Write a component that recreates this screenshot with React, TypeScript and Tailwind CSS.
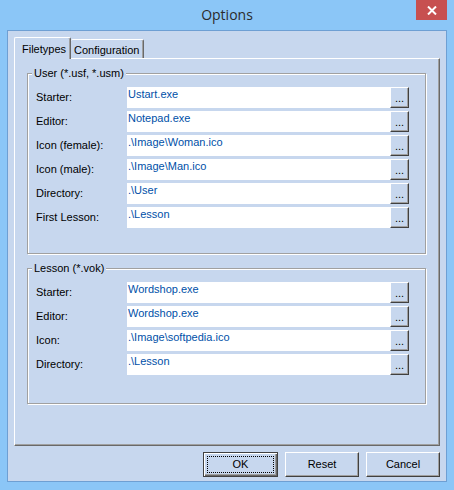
import React from 'react';

const userRows = [
    { label: 'Starter:', value: 'Ustart.exe' },
    { label: 'Editor:', value: 'Notepad.exe' },
    { label: 'Icon (female):', value: '.\\Image\\Woman.ico' },
    { label: 'Icon (male):', value: '.\\Image\\Man.ico' },
    { label: 'Directory:', value: '.\\User' },
    { label: 'First Lesson:', value: '.\\Lesson' },
];

const lessonRows = [
    { label: 'Starter:', value: 'Wordshop.exe' },
    { label: 'Editor:', value: 'Wordshop.exe' },
    { label: 'Icon:', value: '.\\Image\\softpedia.ico' },
    { label: 'Directory:', value: '.\\Lesson' },
];

const Row = ({ label, value }: { label: string; value: string }) => (
    <div className="flex items-center h-[21px]">
        <span className="w-[91px] text-black">{label}</span>
        <div className="w-[263px] h-[21px] bg-white pl-[1px] pt-[1px] leading-[13px] text-[#0050a8] whitespace-nowrap overflow-hidden">
            {value}
        </div>
        <button className="w-[19px] h-[21px] bg-[#c7d7ee] border border-white border-r-[#404040] border-b-[#404040] shadow-[inset_-1px_-1px_0_#a0a0a0] flex items-center justify-center leading-none pt-[2px] text-black">
            ...
        </button>
    </div>
);

const Group = ({ title, rows, height }: { title: string; rows: { label: string; value: string }[]; height: string }) => (
    <fieldset
        className={`w-[399px] ${height} border border-[#a0a0a0] shadow-[1px_1px_0_white,inset_1px_1px_0_white] pl-[8px] pt-[7px]`}
    >
        <legend className="-ml-[4px] px-[2px] leading-[14px] bg-[#c7d7ee] text-black">{title}</legend>
        <div className="flex flex-col gap-[3px]">
            {rows.map((r) => (
                <Row key={r.label} label={r.label} value={r.value} />
            ))}
        </div>
    </fieldset>
);

const DlgButton = ({ label, isDefault }: { label: string; isDefault?: boolean }) =>
    isDefault ? (
        <button className="w-[75px] h-[25px] bg-[#c7d7ee] border border-[#404040] shadow-[inset_1px_1px_0_white,inset_-1px_-1px_0_#696969,inset_-2px_-2px_0_#a0a0a0] p-[3px] text-black">
            <div className="h-full w-full border border-dotted border-black flex items-center justify-center">{label}</div>
        </button>
    ) : (
        <button className="w-[74px] h-[25px] bg-[#c7d7ee] border border-white border-r-[#404040] border-b-[#404040] shadow-[inset_-1px_-1px_0_#a0a0a0] flex items-center justify-center text-black">
            {label}
        </button>
    );

export default function App() {
    return (
        <div className="w-[454px] h-[490px] bg-[#8bc6f7] flex flex-col px-[7px] pb-[8px] font-['Liberation_Sans',Arial,sans-serif] text-[11px] select-none">
            {/* title bar */}
            <div className="h-[30px] grid grid-cols-[1fr_auto_1fr] -mx-[7px]">
                <div />
                <div className="font-['Open_Sans',sans-serif] text-[14px] text-[#2b2b2b] pt-[4px]">Options</div>
                <div className="flex justify-end pr-[7px]">
                    <button className="w-[31px] h-[20px] bg-[#c75050] flex items-center justify-center">
                        <svg width="10" height="9" viewBox="0 0 10 9">
                            <path d="M1 0.5 L9 8.5 M9 0.5 L1 8.5" stroke="white" strokeWidth="2" />
                        </svg>
                    </button>
                </div>
            </div>

            {/* client */}
            <div className="flex-1 bg-[#c7d7ee] border border-[#6e9fd3] flex flex-col px-[6px] pt-[6px]">
                <div className="flex items-end h-[21px]">
                    <div className="relative z-10 w-[57px] h-[22px] -mb-[1px] bg-[#c7d7ee] border-l border-t border-r border-white border-r-[#696969] rounded-t-[2px] shadow-[inset_-1px_0_0_#a0a0a0] px-[7px] pt-[3px] text-black">
                        Filetypes
                    </div>
                    <div className="w-[73px] h-[19px] bg-[#c7d7ee] border-t border-r border-white border-r-[#696969] rounded-t-[2px] shadow-[inset_-1px_0_0_#a0a0a0] px-[3px] pt-[2px] text-black">
                        Configuration
                    </div>
                </div>
                <div className="h-[388px] border border-white border-r-[#696969] border-b-[#696969] shadow-[inset_-1px_-1px_0_#a0a0a0] pl-[12px] pt-[7px] flex flex-col">
                    <Group title="User (*.usf, *.usm)" rows={userRows} height="h-[188px]" />
                    <div className="h-[7px]" />
                    <Group title="Lesson (*.vok)" rows={lessonRows} height="h-[143px]" />
                </div>
                <div className="flex justify-end gap-[7px] mt-[6px]">
                    <DlgButton label="OK" isDefault />
                    <DlgButton label="Reset" />
                    <DlgButton label="Cancel" />
                </div>
            </div>
        </div>
    );
}
